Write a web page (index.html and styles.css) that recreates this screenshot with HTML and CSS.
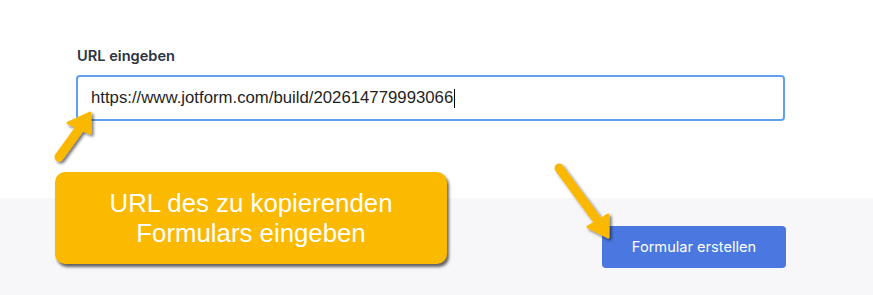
FILE: index.html
```html
<!DOCTYPE html>
<html lang="de">
<head>
<meta charset="utf-8">
<title>URL eingeben</title>
<link rel="stylesheet" href="styles.css">
</head>
<body>
<div class="page">
  <section class="top">
    <label class="label" for="url">URL eingeben</label>
    <div class="input"><span class="value">https://www.jotform.com/build/202614779993066</span><span class="caret"></span></div>
  </section>
  <section class="bottom">
    <button class="btn">Formular erstellen</button>
  </section>

  <div class="callout">URL des zu kopierenden<br>Formulars eingeben</div>

  <svg class="arrows" width="873" height="295" viewBox="0 0 873 295" xmlns="http://www.w3.org/2000/svg">
    <defs>
      <filter id="sh" x="-30%" y="-30%" width="160%" height="160%">
        <feDropShadow dx="2" dy="2" stdDeviation="1.6" flood-color="#000" flood-opacity="0.55"/>
      </filter>
    </defs>
    <g filter="url(#sh)" fill="#fbb800" stroke="#fbb800" stroke-linejoin="round" stroke-linecap="round">
      <line x1="59" y1="157" x2="80" y2="128" stroke-width="9"/>
      <polygon points="90,113 68,123 90,133" stroke-width="3"/>
      <line x1="559" y1="168" x2="598" y2="221" stroke-width="9"/>
      <polygon points="608,237 588,227 608,215" stroke-width="3"/>
    </g>
  </svg>
</div>
</body>
</html>
```
FILE: styles.css
```css
* { box-sizing: border-box; }
html, body { margin: 0; padding: 0; background: #fff; }
.page {
  position: relative;
  width: 873px;
  height: 295px;
  overflow: hidden;
  font-family: "Liberation Sans", Arial, sans-serif;
}
.top {
  height: 198px;
  background: #ffffff;
  padding: 46px 88px 0 76px;
  display: flex;
  flex-direction: column;
}
.label {
  font-family: Inter, "Noto Sans", sans-serif;
  font-weight: 600;
  font-size: 14.6px;
  line-height: 20px;
  color: #2c3345;
  padding-left: 1px;
  margin-bottom: 9px;
}
.input {
  height: 46px;
  border: 2px solid #61a0ee;
  border-radius: 4px;
  display: flex;
  align-items: center;
  padding-left: 13px;
  font-size: 16.75px;
  color: #1f1f1f;
}
.caret {
  display: inline-block;
  width: 1px;
  height: 19px;
  background: #000;
  margin-left: 1px;
}
.bottom {
  height: 97px;
  background: #f7f7f9;
  display: flex;
  justify-content: flex-end;
  align-items: flex-start;
  padding: 28px 87px 0 0;
}
.btn {
  width: 184px;
  height: 42px;
  border: 0;
  border-radius: 4px;
  background: #4a77e0;
  color: #fff;
  font-family: Inter, "Noto Sans", sans-serif;
  font-size: 14.6px;
  font-weight: 400;
  padding: 0;
}
.callout {
  position: absolute;
  left: 55px;
  top: 172px;
  width: 392px;
  height: 92px;
  background: #fbb900;
  border-radius: 10px;
  box-shadow: 2px 3px 3px rgba(0,0,0,0.6);
  color: #fff;
  font-size: 25.8px;
  line-height: 30px;
  text-align: center;
  padding-top: 16px;
}
.arrows {
  position: absolute;
  left: 0;
  top: 0;
  pointer-events: none;
}
```
